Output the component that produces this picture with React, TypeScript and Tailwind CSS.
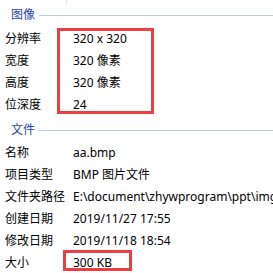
const image = [
  ["分辨率", "320 x 320"],
  ["宽度", "320 像素"],
  ["高度", "320 像素"],
  ["位深度", "24"],
];

const file = [
  ["名称", "aa.bmp"],
  ["项目类型", "BMP 图片文件"],
  ["文件夹路径", "E:\\document\\zhywprogram\\ppt\\img\\aa.bmp"],
  ["创建日期", "2019/11/27 17:55"],
  ["修改日期", "2019/11/18 18:54"],
  ["大小", "300 KB"],
];

function Header({ title }: { title: string }) {
  return (
    <div className="flex items-center h-[20px] pl-[11px]">
      <span className="text-[#1d47a8]">{title}</span>
      <div className="flex-1 h-px bg-[#c3cbe0] ml-[4px]" />
    </div>
  );
}

function Row({ label, value }: { label: string; value: string }) {
  return (
    <div className="flex items-center h-[22px] whitespace-nowrap">
      <span className="w-[73px] shrink-0 pl-[5px]">{label}</span>
      <span>{value}</span>
    </div>
  );
}

export default function App() {
  return (
    <div
      className="relative w-[273px] h-[273px] overflow-hidden bg-white text-[12px] text-black"
      style={{ fontFamily: '"Noto Sans", "Noto Sans CJK SC", sans-serif' }}
    >
      <div className="h-[5px] ml-[66px] w-px bg-[#e3e3e3]" />
      <Header title="图像" />
      <div className="mt-[3px]">
        {image.map(([l, v]) => (
          <Row key={l} label={l} value={v} />
        ))}
      </div>
      <div className="mt-[4px]">
        <Header title="文件" />
      </div>
      <div className="mt-[2px]">
        {file.map(([l, v]) => (
          <Row key={l} label={l} value={v} />
        ))}
      </div>

      {/* 标注框 */}
      <div className="absolute left-[57px] top-[28px] w-[97px] h-[86px] border-[3px] border-[#ef3e42]" />
      <div className="absolute left-[63px] top-[250px] w-[69px] h-[21px] border-[3px] border-[#ef3e42]" />
    </div>
  );
}
